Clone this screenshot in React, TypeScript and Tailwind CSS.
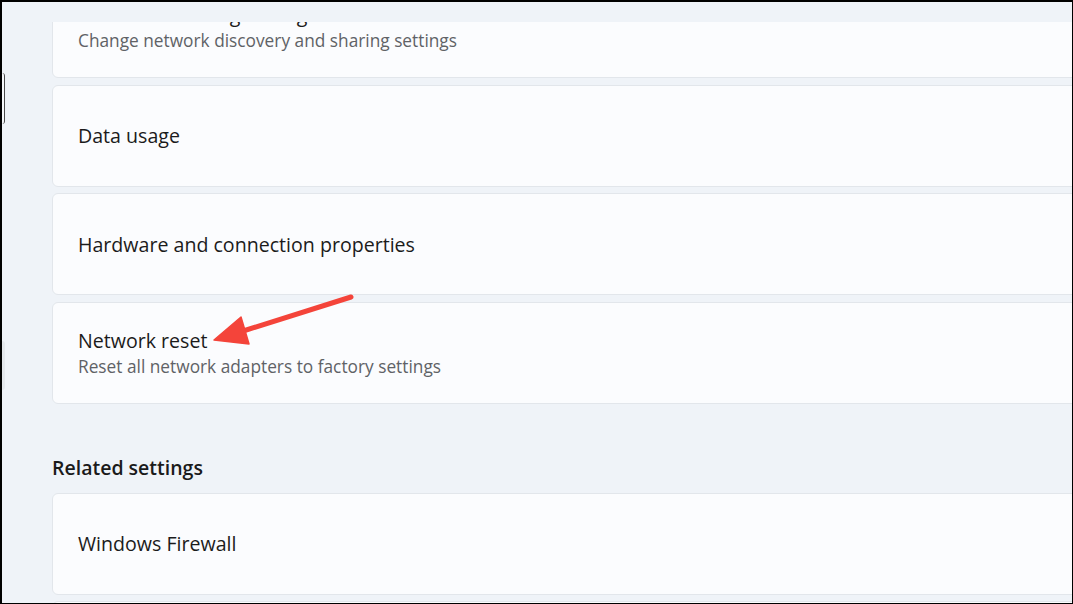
const font = { fontFamily: '"Open Sans", "Noto Sans", sans-serif' };

type Item = { title: string; subtitle?: string };

const topItems: Item[] = [
  { title: 'Advanced sharing settings', subtitle: 'Change network discovery and sharing settings' },
  { title: 'Data usage' },
  { title: 'Hardware and connection properties' },
  { title: 'Network reset', subtitle: 'Reset all network adapters to factory settings' },
];

const SettingCard = ({ item, className = '' }: { item: Item; className?: string }) => (
  <div
    className={`flex h-[102px] w-[1040px] shrink-0 flex-col justify-center rounded-[6px] border border-[#e2e6eb] bg-[#fbfcfe] px-[25px] ${className}`}
  >
    <div className="text-[19.6px] leading-[27px] text-[#1b1b1b]">{item.title}</div>
    {item.subtitle && (
      <div className="text-[17.3px] leading-[25px] text-[#5f6266]">{item.subtitle}</div>
    )}
  </div>
);

export default function App() {
  return (
    <div className="relative h-[604px] w-[1073px] overflow-hidden bg-black pb-[1px] pl-[2px] pr-[1px] pt-[2px]" style={font}>
      <div className="flex h-full w-full overflow-hidden bg-[#eff3f8]">
        {/* sidebar edge */}
        <div className="flex w-[3px] shrink-0 flex-col">
          <div className="mt-[71px] h-[51px] rounded-r-[4px] border-r-[1.5px] border-[#4a4a4a] bg-[#f6f8fb]" />
          <div className="mt-[217px] h-[49px] rounded-r-[4px] bg-[#e4e8ec]" />
        </div>

        <div className="flex min-w-0 flex-1 flex-col pl-[47px]">
          <div className="relative z-10 h-[20px] shrink-0 bg-[#eff3f8]" />
          <div className="flex flex-1 flex-col gap-[6.5px] overflow-hidden">
            {topItems.map((item, i) => (
              <SettingCard key={item.title} item={item} className={i === 0 ? 'mt-[-46px]' : ''} />
            ))}

            <h2 className="mb-[4px] mt-[44px] text-[19.5px] font-semibold leading-[28px] text-[#1a1a1a]">
              Related settings
            </h2>

            <SettingCard item={{ title: 'Windows Firewall' }} className="bg-[#f8f9fb]" />
            <SettingCard item={{ title: 'Internet options' }} className="bg-[#f8f9fb]" />
          </div>
        </div>
      </div>

      {/* annotation arrow */}
      <svg className="pointer-events-none absolute left-0 top-0" width="1073" height="604" viewBox="0 0 1073 604">
        <line x1="351" y1="297" x2="240" y2="332" stroke="#f4443a" strokeWidth="5" strokeLinecap="round" />
        <polygon points="214,340 241,317 249,344" fill="#f4443a" stroke="#f4443a" strokeWidth="1.5" strokeLinejoin="round" />
      </svg>
    </div>
  );
}
